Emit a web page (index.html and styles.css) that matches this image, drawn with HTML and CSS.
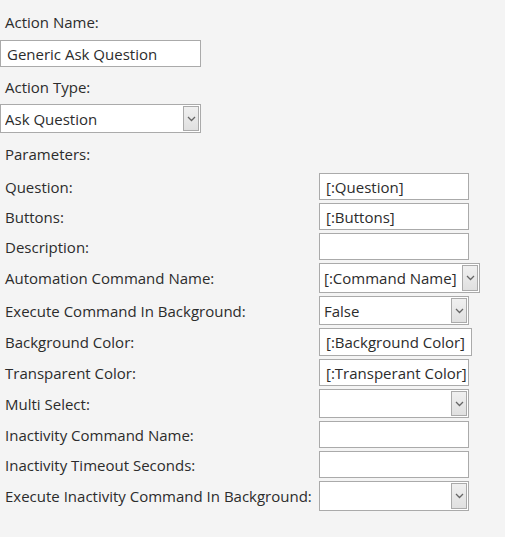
FILE: index.html
```html
<!DOCTYPE html>
<html>
<head>
<meta charset="utf-8">
<link rel="stylesheet" href="styles.css">
</head>
<body>
<div class="page">
  <div class="label top1">Action Name:</div>
  <div class="input wide">Generic Ask Question</div>
  <div class="label top2">Action Type:</div>
  <div class="select wide h29"><span class="val">Ask Question</span><span class="btn"><svg width="9" height="6" viewBox="0 0 9 6"><path d="M1 1 L4.5 4.5 L8 1" fill="none" stroke="#666" stroke-width="1.3"/></svg></span></div>
  <div class="label top3">Parameters:</div>

  <div class="params">
    <div class="plabel">Question:</div>
    <div class="input w150">[:Question]</div>

    <div class="plabel">Buttons:</div>
    <div class="input w150">[:Buttons]</div>

    <div class="plabel">Description:</div>
    <div class="input w150"></div>

    <div class="plabel">Automation Command Name:</div>
    <div class="select w161 h30"><span class="val">[:Command Name]</span><span class="btn"><svg width="9" height="6" viewBox="0 0 9 6"><path d="M1 1 L4.5 4.5 L8 1" fill="none" stroke="#666" stroke-width="1.3"/></svg></span></div>

    <div class="plabel">Execute Command In Background:</div>
    <div class="select w150 h29"><span class="val">False</span><span class="btn"><svg width="9" height="6" viewBox="0 0 9 6"><path d="M1 1 L4.5 4.5 L8 1" fill="none" stroke="#666" stroke-width="1.3"/></svg></span></div>

    <div class="plabel">Background Color:</div>
    <div class="input w153 h28">[:Background Color]</div>

    <div class="plabel">Transparent Color:</div>
    <div class="input w150">[:Transperant Color]</div>

    <div class="plabel">Multi Select:</div>
    <div class="select w150 h29"><span class="val"></span><span class="btn"><svg width="9" height="6" viewBox="0 0 9 6"><path d="M1 1 L4.5 4.5 L8 1" fill="none" stroke="#666" stroke-width="1.3"/></svg></span></div>

    <div class="plabel">Inactivity Command Name:</div>
    <div class="input w150"></div>

    <div class="plabel">Inactivity Timeout Seconds:</div>
    <div class="input w150"></div>

    <div class="plabel">Execute Inactivity Command In Background:</div>
    <div class="select w150 h30"><span class="val"></span><span class="btn"><svg width="9" height="6" viewBox="0 0 9 6"><path d="M1 1 L4.5 4.5 L8 1" fill="none" stroke="#666" stroke-width="1.3"/></svg></span></div>
  </div>
</div>
</body>
</html>
```
FILE: styles.css
```css
html, body {
  margin: 0;
  padding: 0;
  background: #f4f4f4;
}
body {
  font-family: "Open Sans", "Noto Sans", sans-serif;
  font-size: 15px;
  color: #2c2c2c;
  height: 537px;
}
.page {
  display: flex;
  flex-direction: column;
  align-items: flex-start;
}
.label {
  padding-left: 5px;
  line-height: 20px;
}
.top1 { margin-top: 12px; margin-bottom: 8px; }
.top2 { margin-top: 10px; margin-bottom: 7px; }
.top3 { margin-top: 11px; margin-bottom: 9px; }
.input, .select {
  box-sizing: border-box;
  background: #fff;
  border: 1px solid #aaa;
  height: 27px;
  display: flex;
  align-items: center;
  white-space: nowrap;
  overflow: hidden;
}
.input { padding-left: 6px; }
.select { padding-left: 4px; padding-right: 1px; justify-content: space-between; }
.wide { width: 201px; }
.w150 { width: 150px; }
.w153 { width: 153px; }
.w161 { width: 161px; }
.h28 { height: 28px; }
.h29 { height: 29px; }
.h30 { height: 30px; }
.val { flex: 1; overflow: hidden; }
.btn {
  box-sizing: border-box;
  width: 16px;
  align-self: stretch;
  margin: 1px 0;
  border: 1px solid #aaa;
  background: linear-gradient(#f0f0f0, #e0e0e0);
  display: flex;
  align-items: center;
  justify-content: center;
}
.params {
  display: grid;
  grid-template-columns: 319px auto;
  row-gap: 3px;
  align-items: center;
  justify-items: start;
}
.plabel {
  padding-left: 5px;
  white-space: nowrap;
}
```
